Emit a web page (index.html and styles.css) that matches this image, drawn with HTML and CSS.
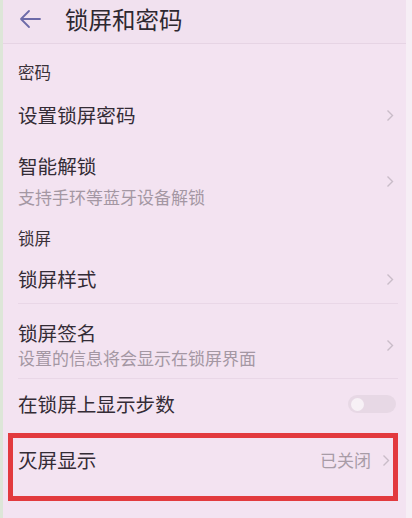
FILE: index.html
```html
<!DOCTYPE html>
<html lang="zh-CN">
<head>
    <meta charset="UTF-8">
    <meta name="viewport" content="width=device-width, initial-scale=1.0">
    <title>锁屏和密码</title>
    <link rel="stylesheet" href="styles.css">
</head>
<body>
    <header class="bar">
        <svg class="back" width="24" height="20" viewBox="0 0 24 20">
            <path d="M22 10H3M11 2L3 10l8 8" fill="none" stroke="#6c6aa8" stroke-width="1.8" stroke-linecap="round" stroke-linejoin="round"/>
        </svg>
        <h1 class="bar-title">锁屏和密码</h1>
    </header>

    <section class="list">
        <div class="group-title first">密码</div>
        <div class="row row-pwd">
            <span class="row-text">设置锁屏密码</span>
            <svg class="chev" width="8" height="13" viewBox="0 0 8 13"><path d="M1.5 1.5l5 5-5 5" fill="none" stroke="#c9bcc8" stroke-width="1.4"/></svg>
        </div>
        <div class="row row-two row-smart">
            <div class="row-text">
                <p class="main">智能解锁</p>
                <p class="sub">支持手环等蓝牙设备解锁</p>
            </div>
            <svg class="chev" width="8" height="13" viewBox="0 0 8 13"><path d="M1.5 1.5l5 5-5 5" fill="none" stroke="#c9bcc8" stroke-width="1.4"/></svg>
        </div>

        <div class="group-title">锁屏</div>
        <div class="row row-style line">
            <span class="row-text">锁屏样式</span>
            <svg class="chev" width="8" height="13" viewBox="0 0 8 13"><path d="M1.5 1.5l5 5-5 5" fill="none" stroke="#c9bcc8" stroke-width="1.4"/></svg>
        </div>
        <div class="row row-two row-sign line">
            <div class="row-text">
                <p class="main">锁屏签名</p>
                <p class="sub">设置的信息将会显示在锁屏界面</p>
            </div>
            <svg class="chev" width="8" height="13" viewBox="0 0 8 13"><path d="M1.5 1.5l5 5-5 5" fill="none" stroke="#c9bcc8" stroke-width="1.4"/></svg>
        </div>
        <div class="row row-steps">
            <span class="row-text">在锁屏上显示步数</span>
            <span class="toggle"><span class="knob"></span></span>
        </div>

        <div class="mark">
            <div class="row row-aod">
                <span class="row-text">灭屏显示</span>
                <span class="value">已关闭</span>
                <svg class="chev" width="8" height="13" viewBox="0 0 8 13"><path d="M1.5 1.5l5 5-5 5" fill="none" stroke="#c9bcc8" stroke-width="1.4"/></svg>
            </div>
        </div>
    </section>
</body>
</html>
```

FILE: styles.css
```css
html {
    box-sizing: border-box;
    font-family: "Noto Sans CJK SC", "Noto Sans", sans-serif;
}

*, *::after, *::before {
    box-sizing: inherit;
}

body {
    margin: 0;
    height: 518px;
    overflow: hidden;
    background-color: #f3e3f1;
    border-left: 3px solid #dde6d8;
    border-right: 6px solid #f6eef5;
    color: #342c36;
}

p {
    margin: 0;
}

.bar {
    display: flex;
    align-items: center;
    height: 44px;
    padding: 0 0 6px 15px;
    background-color: #f1e1ef;
    border-bottom: 1px solid #e6d4e4;
}

.back {
    display: block;
}

.bar-title {
    margin: 0 0 0 23px;
    font-size: 23.5px;
    font-weight: normal;
    line-height: 28px;
    color: #2e2830;
}

.list {
    padding: 0 0 0 15px;
}

.group-title {
    padding: 7px 0 7px;
    font-size: 16.5px;
    line-height: 20px;
    color: #3a3139;
}

.group-title.first {
    padding-top: 18px;
    padding-bottom: 10px;
}

.row {
    display: flex;
    align-items: center;
    padding-right: 12px;
    font-size: 19.6px;
    line-height: 26px;
}

.row-text {
    flex: 1;
}

.line {
    border-bottom: 1px solid #e9d7e7;
}

.row-pwd {
    height: 46px;
}

.row-smart {
    padding-top: 15px;
    padding-bottom: 12px;
}

.row-two .sub {
    margin-top: 6px;
    font-size: 17px;
    line-height: 24px;
    color: #a497a3;
}

.row-style {
    height: 49px;
    margin-right: 8px;
    padding-right: 4px;
}

.row-sign {
    padding-top: 16px;
    padding-bottom: 8px;
    margin-right: 8px;
    padding-right: 4px;
}

.row-sign .sub {
    margin-top: 0;
}

.row-steps {
    height: 50px;
    padding-right: 10px;
}

.toggle {
    display: flex;
    align-items: center;
    width: 48px;
    height: 18px;
    padding: 0 3px;
    border-radius: 9px;
    background-color: #e7d8e5;
}

.knob {
    width: 13px;
    height: 13px;
    border-radius: 50%;
    background-color: #f7f1f6;
}

.mark {
    margin: 4px 8px 0 -10px;
    border: 5px solid #e23a3e;
}

.row-aod {
    padding: 9px 3px 23px 5px;
}

.value {
    margin-right: 11px;
    font-size: 17px;
    color: #a89ca7;
}
```
